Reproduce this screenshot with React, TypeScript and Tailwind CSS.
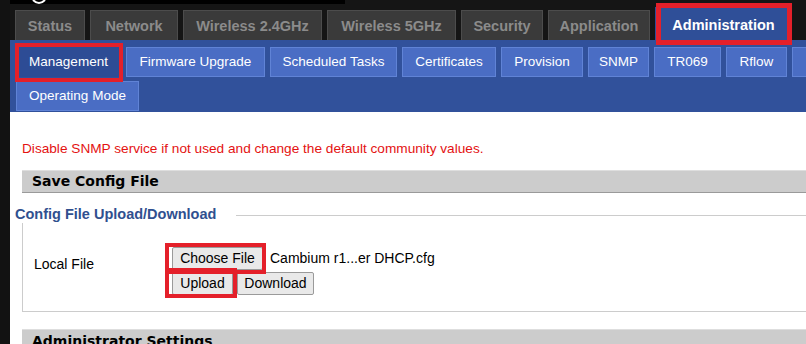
import React from "react";

const mainTabs = [
  { label: "Status", w: "w-[70px]" },
  { label: "Network", w: "w-[88px]" },
  { label: "Wireless 2.4GHz", w: "w-[139px]" },
  { label: "Wireless 5GHz", w: "w-[129px]" },
  { label: "Security", w: "w-[82px]" },
  { label: "Application", w: "w-[102px]" },
];

const subTabs = [
  { label: "Management", w: "w-[105px]", active: true },
  { label: "Firmware Upgrade", w: "w-[139px]" },
  { label: "Scheduled Tasks", w: "w-[127px]" },
  { label: "Certificates", w: "w-[94px]" },
  { label: "Provision", w: "w-[82px]" },
  { label: "SNMP", w: "w-[61px]" },
  { label: "TR069", w: "w-[67px]" },
  { label: "Rflow", w: "w-[61px]" },
  { label: "Logs", w: "w-[60px]" },
];

function SubTab({ label, w, active }: { label: string; w: string; active?: boolean }) {
  return (
    <div
      className={`${w} h-[30px] shrink-0 flex items-center justify-center border pt-[1px] text-white text-[13.5px] ${
        active ? "bg-[#2d4c95] border-[#2d4c95]" : "bg-[#4a6dc4] border-[#6083d6]"
      }`}
    >
      {label}
    </div>
  );
}

function Btn({ children, w }: { children: React.ReactNode; w: string }) {
  return (
    <div
      className={`${w} h-[23px] flex items-center justify-center bg-[#e9e9e9] border border-[#9a9a9a] rounded-[2px] text-[14px] text-black`}
    >
      {children}
    </div>
  );
}

export default function App() {
  return (
    <div className="relative w-[806px] h-[344px] overflow-hidden bg-[#121212] pl-[10px] flex font-['Liberation_Sans',Arial,sans-serif]">
      <div className="flex-1 flex flex-col min-w-0">
        {/* top bar */}
        <div className="relative h-[40px] shrink-0 bg-[#151515]">
          <div className="absolute left-0 top-0 w-[335px] h-[4px] bg-black" />
          <svg className="absolute left-[22px] top-0" width="14" height="5" viewBox="0 0 14 5">
            <path d="M1 0 Q7 6 13 0" stroke="#fff" strokeWidth="2" fill="none" />
          </svg>
          <div className="absolute left-[5px] right-0 bottom-0 flex items-end gap-[5px] whitespace-nowrap">
            {mainTabs.map((t) => (
              <div
                key={t.label}
                className={`${t.w} h-[30px] shrink-0 flex items-center justify-center pt-[2px] bg-[#3a3a3a] border border-b-0 border-[#4c4c4c] text-[#8b8b8b] font-bold text-[14.5px]`}
              >
                {t.label}
              </div>
            ))}
            <div className="w-[137px] h-[33px] shrink-0 flex items-center justify-center bg-[#2f4f98] text-white font-bold text-[14.5px] pt-[4px]">
              Administration
            </div>
          </div>
        </div>

        {/* sub nav */}
        <div className="h-[72px] shrink-0 bg-[#31519b] pl-[6px] pt-[7px] flex flex-col gap-[4px]">
          <div className="flex gap-[5px] whitespace-nowrap">
            {subTabs.map((t) => (
              <SubTab key={t.label} {...t} />
            ))}
          </div>
          <div className="flex">
            <SubTab label="Operating Mode" w="w-[123px]" />
          </div>
        </div>

        {/* content */}
        <div className="flex-1 bg-white flex flex-col">
          <div className="pl-[12px] pt-[29px] h-[45px] text-[13.65px] text-[#e41212] leading-[16px] whitespace-nowrap">
            Disable SNMP service if not used and change the default community values.
          </div>
          <div className="ml-[12px] mt-[13px] h-[23px] bg-[#cccccc] border-t border-[#dedede] border-b border-b-[#9a9a9a] flex items-center pl-[10px] font-['DejaVu_Sans',Verdana,sans-serif] font-bold text-[14px] text-black">
            Save Config File
          </div>

          {/* fieldset */}
          <div className="mt-[14px] flex items-center h-[16px]">
            <div className="pl-[5px] font-bold text-[14.5px] text-[#30508f] whitespace-nowrap">
              Config File Upload/Download
            </div>
            <div className="flex-1 ml-[20px] border-t border-[#cccccc]" />
          </div>
          <div className="ml-[12px] h-[89px] border-l border-b border-[#cccccc] flex items-start">
            <div className="w-[149px] shrink-0 pl-[11px] pt-[31px] text-[14px] text-black">Local File</div>
            <div className="pt-[24px] flex flex-col gap-[2px]">
              <div className="flex items-center gap-[7px]">
                <Btn w="w-[91px]">Choose File</Btn>
                <span className="text-[14px] text-black whitespace-nowrap">Cambium r1...er DHCP.cfg</span>
              </div>
              <div className="flex items-center gap-[4px]">
                <Btn w="w-[61px]">Upload</Btn>
                <Btn w="w-[77px]">Download</Btn>
              </div>
            </div>
          </div>

          <div className="ml-[12px] mt-[17px] h-[23px] bg-[#cccccc] border-t border-[#dedede] flex items-center pl-[10px] font-['DejaVu_Sans',Verdana,sans-serif] font-bold text-[14px] text-black whitespace-nowrap">
            Administrator Settings
          </div>
        </div>
      </div>

      {/* red annotation boxes */}
      <div className="absolute left-[656px] top-[3px] w-[136px] h-[42px] border-[5px] border-[#e4202a]" />
      <div className="absolute left-[15px] top-[43px] w-[108px] h-[39px] border-[4px] border-[#e4202a]" />
      <div className="absolute left-[165px] top-[243px] w-[101px] h-[31px] border-[4px] border-[#e4202a]" />
      <div className="absolute left-[165px] top-[268px] w-[72px] h-[30px] border-[4px] border-[#e4202a]" />
    </div>
  );
}
